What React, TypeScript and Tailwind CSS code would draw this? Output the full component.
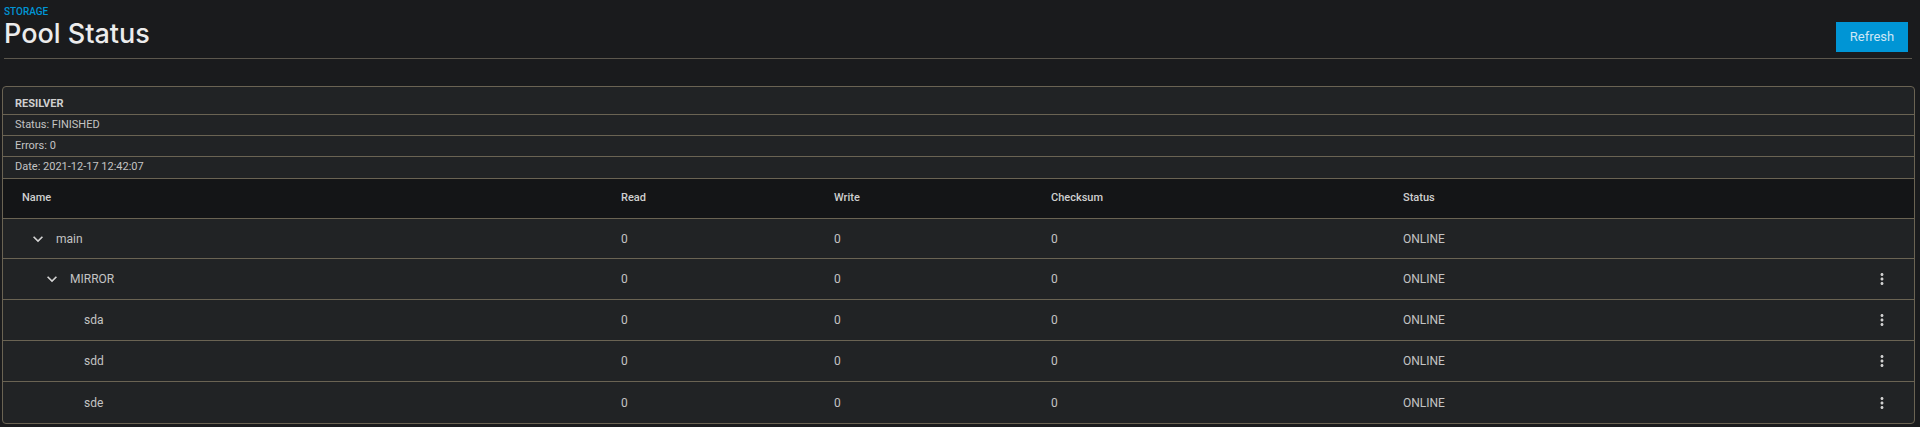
import React from "react";

type Row = { name: string; level: number; expandable: boolean; actions: boolean };

const rows: Row[] = [
  { name: "main", level: 0, expandable: true, actions: false },
  { name: "MIRROR", level: 1, expandable: true, actions: true },
  { name: "sda", level: 2, expandable: false, actions: true },
  { name: "sdd", level: 2, expandable: false, actions: true },
  { name: "sde", level: 2, expandable: false, actions: true },
];

const indent: Record<number, string> = {
  0: "pl-[25px]",
  1: "pl-[39px]",
  2: "pl-[53px]",
};

const gridCols = "grid grid-cols-[618px_213px_217px_352px_1fr_42px]";

function Chevron() {
  return (
    <svg width="20" height="20" viewBox="0 0 24 24" className="block">
      <path d="M16.59 8.59L12 13.17 7.41 8.59 6 10l6 6 6-6z" fill="#d4d4d4" />
    </svg>
  );
}

function MoreVert() {
  return (
    <svg width="18" height="18" viewBox="0 0 24 24" className="block">
      <path
        d="M12 8c1.1 0 2-.9 2-2s-.9-2-2-2-2 .9-2 2 .9 2 2 2zm0 2c-1.1 0-2 .9-2 2s.9 2 2 2 2-.9 2-2-.9-2-2-2zm0 6c-1.1 0-2 .9-2 2s.9 2 2 2 2-.9 2-2-.9-2-2-2z"
        fill="#cfcfcf"
      />
    </svg>
  );
}

export default function App() {
  return (
    <div className="min-h-screen w-full bg-[#1a1b1d] font-['Roboto',sans-serif] text-[#c4c4c4]">
      <div className="flex items-start justify-between pl-1 pr-[12px]">
        <div className="pt-[6px]">
          <div className="text-[10px] leading-[11px] font-medium text-[#0095d5]">STORAGE</div>
          <h1 className="font-['Inter',sans-serif] text-[27px] leading-[34px] font-medium text-[#ececec]">
            Pool Status
          </h1>
        </div>
        <button className="mt-[22px] h-[30px] w-[72px] bg-[#0095d5] text-[13px] text-[#cde7f5]">
          Refresh
        </button>
      </div>
      <div className="ml-1 mr-[8px] mt-[6px] h-px bg-[#5c574d]" />

      <div className="ml-[2px] mr-[5px] mt-[27px] overflow-hidden rounded-[4px] border border-[#6a6353] bg-[#212325]">
        <div className="h-[28px] border-b border-[#6a6353] pl-[12px] pt-[10px] text-[11px] font-bold leading-[13px] text-[#cfcfcf]">
          RESILVER
        </div>
        <div className="flex h-[21px] items-center border-b border-[#6a6353] pl-[12px] text-[11px]">
          Status: FINISHED
        </div>
        <div className="flex h-[21px] items-center border-b border-[#6a6353] pl-[12px] text-[11px]">
          Errors: 0
        </div>
        <div className="flex h-[22px] items-center border-b border-[#6a6353] pl-[12px] text-[11px]">
          Date: 2021-12-17 12:42:07
        </div>

        <div className={`${gridCols} h-[40px] items-center border-b border-[#6a6353] bg-[#141517] text-[11px] font-medium text-[#cfcfcf]`}>
          <div className="pl-[19px]">Name</div>
          <div>Read</div>
          <div>Write</div>
          <div>Checksum</div>
          <div>Status</div>
          <div />
        </div>

        {rows.map((r, i) => (
          <div
            key={r.name}
            className={`${gridCols} ${i === 0 ? "h-[40px]" : "h-[41px]"} items-center text-[12px] ${
              i < rows.length - 1 ? "border-b border-[#6a6353]" : ""
            }`}
          >
            <div className={`flex items-center ${indent[r.level]}`}>
              <div className="w-[20px]">{r.expandable ? <Chevron /> : null}</div>
              <span className="ml-[8px]">{r.name}</span>
            </div>
            <div>0</div>
            <div>0</div>
            <div>0</div>
            <div>ONLINE</div>
            <div className="flex justify-start pl-[1px]">{r.actions ? <MoreVert /> : null}</div>
          </div>
        ))}
      </div>
    </div>
  );
}
